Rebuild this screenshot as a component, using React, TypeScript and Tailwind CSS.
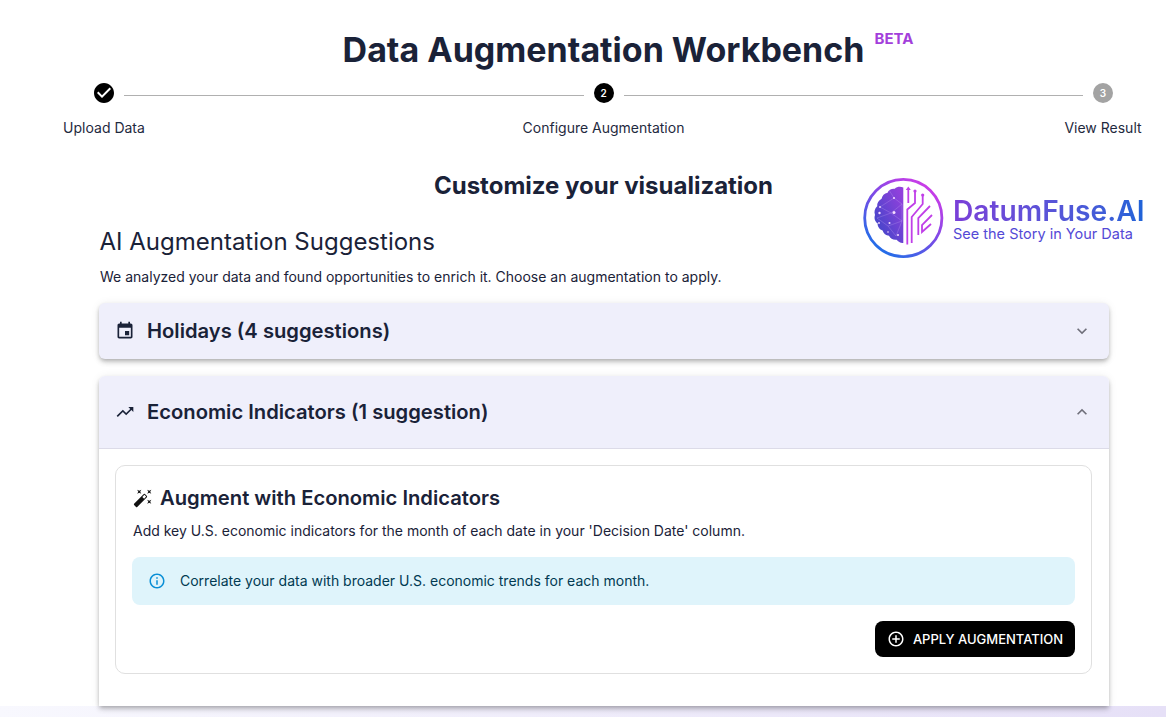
import { FC } from "react";

const PATHS = {
  check:
    "M12 2C6.48 2 2 6.48 2 12s4.48 10 10 10 10-4.48 10-10S17.52 2 12 2zm-2 15-5-5 1.41-1.41L10 14.17l7.59-7.59L19 8l-9 9z",
  event:
    "M17 12h-5v5h5v-5zM16 1v2H8V1H6v2H5c-1.11 0-1.99.9-1.99 2L3 19c0 1.1.89 2 2 2h14c1.1 0 2-.9 2-2V5c0-1.1-.9-2-2-2h-1V1h-2zm3 18H5V8h14v11z",
  trending:
    "M16 6l2.29 2.29-4.88 4.88-4-4L2 16.59 3.41 18l6-6 4 4 6.3-6.29L22 12V6z",
  wand:
    "M7.5 5.6 10 7 8.6 4.5 10 2 7.5 3.4 5 2l1.4 2.5L5 7zm12 9.8L17 14l1.4 2.5L17 19l2.5-1.4L22 19l-1.4-2.5L22 14zM22 2l-2.5 1.4L17 2l1.4 2.5L17 7l2.5-1.4L22 7l-1.4-2.5zm-7.63 5.29a.9959.9959 0 0 0-1.41 0L1.29 18.96c-.39.39-.39 1.02 0 1.41l2.34 2.34c.39.39 1.02.39 1.41 0L16.7 11.05c.39-.39.39-1.02 0-1.41l-2.33-2.35zm-1.03 5.49-2.12-2.12 2.44-2.44 2.12 2.12-2.44 2.44z",
  down: "M16.59 8.59 12 13.17 7.41 8.59 6 10l6 6 6-6z",
  up: "m12 8-6 6 1.41 1.41L12 10.83l4.59 4.58L18 14z",
  info:
    "M11 7h2v2h-2zm0 4h2v6h-2zm1-9C6.48 2 2 6.48 2 12s4.48 10 10 10 10-4.48 10-10S17.52 2 12 2zm0 18c-4.41 0-8-3.59-8-8s3.59-8 8-8 8 3.59 8 8-3.59 8-8 8z",
  add:
    "M13 7h-2v4H7v2h4v4h2v-4h4v-2h-4V7zm-1-5C6.48 2 2 6.48 2 12s4.48 10 10 10 10-4.48 10-10S17.52 2 12 2zm0 18c-4.41 0-8-3.59-8-8s3.59-8 8-8 8 3.59 8 8-3.59 8-8 8z",
};

const Icon: FC<{ d: string; className?: string }> = ({ d, className }) => (
  <svg viewBox="0 0 24 24" fill="currentColor" className={className}>
    <path d={d} />
  </svg>
);

const StepNumber: FC<{ n: number; className: string }> = ({ n, className }) => (
  <div
    className={`flex h-5 w-5 shrink-0 items-center justify-center rounded-full text-[10px] font-semibold text-white ${className}`}
  >
    {n}
  </div>
);

const Logo = () => (
  <div className="absolute left-[861px] top-[176px] flex items-center">
    <svg viewBox="0 0 84 84" className="h-[84px] w-[84px] shrink-0">
      <defs>
        <linearGradient id="ring" x1="0.85" y1="0.05" x2="0.2" y2="0.95">
          <stop offset="0" stopColor="#d23be8" />
          <stop offset="0.5" stopColor="#7a4be6" />
          <stop offset="1" stopColor="#1f6fe8" />
        </linearGradient>
        <linearGradient id="brain" x1="0.9" y1="0.1" x2="0.1" y2="0.9">
          <stop offset="0" stopColor="#9140dc" />
          <stop offset="1" stopColor="#3f46c8" />
        </linearGradient>
      </defs>
      <circle cx="42.3" cy="42" r="38.6" fill="none" stroke="url(#ring)" strokeWidth="2.8" />
      <path
        fill="url(#brain)"
        d="M42.3 11.5c-3-1.2-6.5-.8-8.5 1.2-3.2-.4-6.2 1.2-7.2 4-3.2.6-5.6 3-6 6-3 1.6-4.8 4.4-4.4 7.6-2.4 2.2-3.4 5.6-2.2 8.6-1.2 3 0 6.6 2.6 8.4-.2 3.4 2 6.2 5 7.2.8 3 3.4 5 6.4 5.2 1.4 3 4.6 4.6 7.6 4 1.8 2.2 4.2 3.6 6.7 3.2z"
      />
      <g stroke="#d3b4f7" strokeWidth="0.35" fill="none" opacity="0.7">
        <path d="M19 31 33 22 41 28 30 37 19 31M30 37 41 45 27 50 16 42 30 37M41 45 35 60 27 50M33 22 28 14M41 28 41 45" />
      </g>
      <g fill="#f6defF">
        <circle cx="33" cy="22" r="1" />
        <circle cx="19" cy="31" r="0.9" />
        <circle cx="33" cy="36.5" r="1.5" />
        <circle cx="18.5" cy="37" r="1.2" />
        <circle cx="28.5" cy="47" r="1" />
        <circle cx="18" cy="47" r="0.9" />
        <circle cx="37" cy="59" r="1" />
        <circle cx="27" cy="56" r="0.8" />
      </g>
      <g stroke="#c03fe8" strokeWidth="1.8" fill="none">
        <path d="M47.3 13.5V27" />
        <path d="M54 15V27L46.3 33.5V68.5" />
        <path d="M61.7 19V28L50.7 41V67" />
        <path d="M69 30 57.3 42V59" />
        <path d="M71 39 61 49V56L70 48" />
      </g>
      <g fill="#c03fe8">
        <path d="M47.3 10.5 49.8 14H44.8z" />
        <circle cx="54" cy="15" r="1.6" />
        <circle cx="61.7" cy="19" r="1.6" />
      </g>
    </svg>
    <div className="ml-[8px] flex flex-col">
      <div className="mt-[2px] bg-gradient-to-r from-[#7a3fd8] to-[#1e63d8] bg-clip-text text-[28.2px] font-semibold leading-[30px] text-transparent">
        DatumFuse.AI
      </div>
      <div className="text-[14.5px] font-normal leading-[16px] text-[#5449d6]">
        See the Story in Your Data
      </div>
    </div>
  </div>
);

const App = () => {
  return (
    <div
      className="relative flex h-[717px] w-full flex-col overflow-hidden bg-white text-[#1a2238]"
      style={{ fontFamily: "Inter, sans-serif" }}
    >
      <main className="relative z-10 h-[706px] shrink-0">
        {/* Title */}
        <div className="ml-[44px] w-[1119px] pt-[28px]">
          <div className="relative mx-auto w-fit">
            <h1 className="text-[34px] font-bold leading-[44px]">
              Data Augmentation Workbench
            </h1>
            <span className="absolute left-[532px] top-[2px] text-[15px] font-bold leading-[18px] text-[#a33fdb]">
              BETA
            </span>
          </div>

          {/* Stepper */}
          <div className="mt-[11px] flex items-center px-[50px]">
            <Icon d={PATHS.check} className="h-6 w-6 shrink-0 -mx-[2px] -my-[2px] text-black" />
            <div className="mx-[10px] mt-[4px] h-px flex-1 bg-[#b0b0b0]" />
            <StepNumber n={2} className="bg-black" />
            <div className="mx-[10px] mt-[4px] h-px flex-1 bg-[#b0b0b0]" />
            <StepNumber n={3} className="bg-[#a3a3a3]" />
          </div>
          <div className="mt-[15px] flex justify-between text-center text-[14px] leading-[20px] text-[#1f2a40]">
            <div className="w-[120px]">Upload Data</div>
            <div className="w-[170px] -mx-[25px]">Configure Augmentation</div>
            <div className="w-[120px]">View Result</div>
          </div>

          <h2 className="mt-[32px] text-center text-[24px] font-bold leading-[32px]">
            Customize your visualization
          </h2>
        </div>

        <Logo />

        <div className="ml-[99px] w-[1010px]">
          <h3 className="ml-[0.5px] mt-[24px] text-[24px] font-normal leading-[32px]">
            AI Augmentation Suggestions
          </h3>
          <p className="ml-px mt-[9px] text-[14px] leading-[20px]">
            We analyzed your data and found opportunities to enrich it. Choose an
            augmentation to apply.
          </p>

          {/* Holidays */}
          <div className="mt-[16px] flex h-[56px] items-center rounded-[6px] bg-[#efeffb] pl-[16px] pr-[17px] shadow-[0_2px_4px_-1px_rgba(0,0,0,0.25),0_4px_5px_0_rgba(0,0,0,0.1),0_1px_10px_0_rgba(0,0,0,0.08)]">
            <Icon d={PATHS.event} className="h-5 w-5 shrink-0" />
            <span className="ml-[12px] text-[20.2px] font-semibold">
              Holidays (4 suggestions)
            </span>
            <Icon d={PATHS.down} className="ml-auto h-5 w-5 text-[#6f6f7a]" />
          </div>

          {/* Economic Indicators */}
          <div className="mt-[17px] h-[330px] rounded-t-[6px] bg-white shadow-[0_2px_4px_-1px_rgba(0,0,0,0.25),0_4px_5px_0_rgba(0,0,0,0.1),0_1px_10px_0_rgba(0,0,0,0.08)]">
            <div className="flex h-[73px] items-center rounded-t-[6px] border-b border-[#dcdbe8] bg-[#efeffb] pl-[16px] pr-[17px]">
              <Icon d={PATHS.trending} className="h-5 w-5 shrink-0" />
              <span className="ml-[12px] text-[20.2px] font-semibold">
                Economic Indicators (1 suggestion)
              </span>
              <Icon d={PATHS.up} className="ml-auto h-5 w-5 text-[#6f6f7a]" />
            </div>

            <div className="pl-[16px] pr-[17px] pt-[16px]">
              <div className="h-[209px] rounded-[10px] border border-[#e0e0e0] px-[16px] pt-[19px]">
                <div className="flex items-center pl-px">
                  <Icon d={PATHS.wand} className="h-5 w-5 shrink-0 text-[#111]" />
                  <span className="ml-[7px] text-[20.2px] font-semibold leading-[26px]">
                    Augment with Economic Indicators
                  </span>
                </div>
                <p className="mt-[10px] pl-px text-[14px] leading-[20px]">
                  Add key U.S. economic indicators for the month of each date in your
                  'Decision Date' column.
                </p>
                <div className="mt-[16px] flex h-[48px] items-center rounded-[8px] bg-[#dff4fb] pl-[16px]">
                  <Icon d={PATHS.info} className="h-[18px] w-[18px] shrink-0 text-[#0a8fd6]" />
                  <span className="ml-[14px] pb-[2px] text-[14px] text-[#013a52]">
                    Correlate your data with broader U.S. economic trends for each month.
                  </span>
                </div>
                <div className="mt-[16px] flex justify-end">
                  <button className="flex h-[36px] w-[200px] items-center justify-center gap-[8px] rounded-[8px] bg-black text-[13px] font-medium text-white">
                    <Icon d={PATHS.add} className="h-[18px] w-[18px]" />
                    <span className="pt-[2px]">APPLY AUGMENTATION</span>
                  </button>
                </div>
              </div>
            </div>
          </div>
        </div>
      </main>
      <div className="h-[11px] shrink-0 bg-gradient-to-r from-[#f8f8fe] to-[#e6e0f7]" />
    </div>
  );
};

export default App;
